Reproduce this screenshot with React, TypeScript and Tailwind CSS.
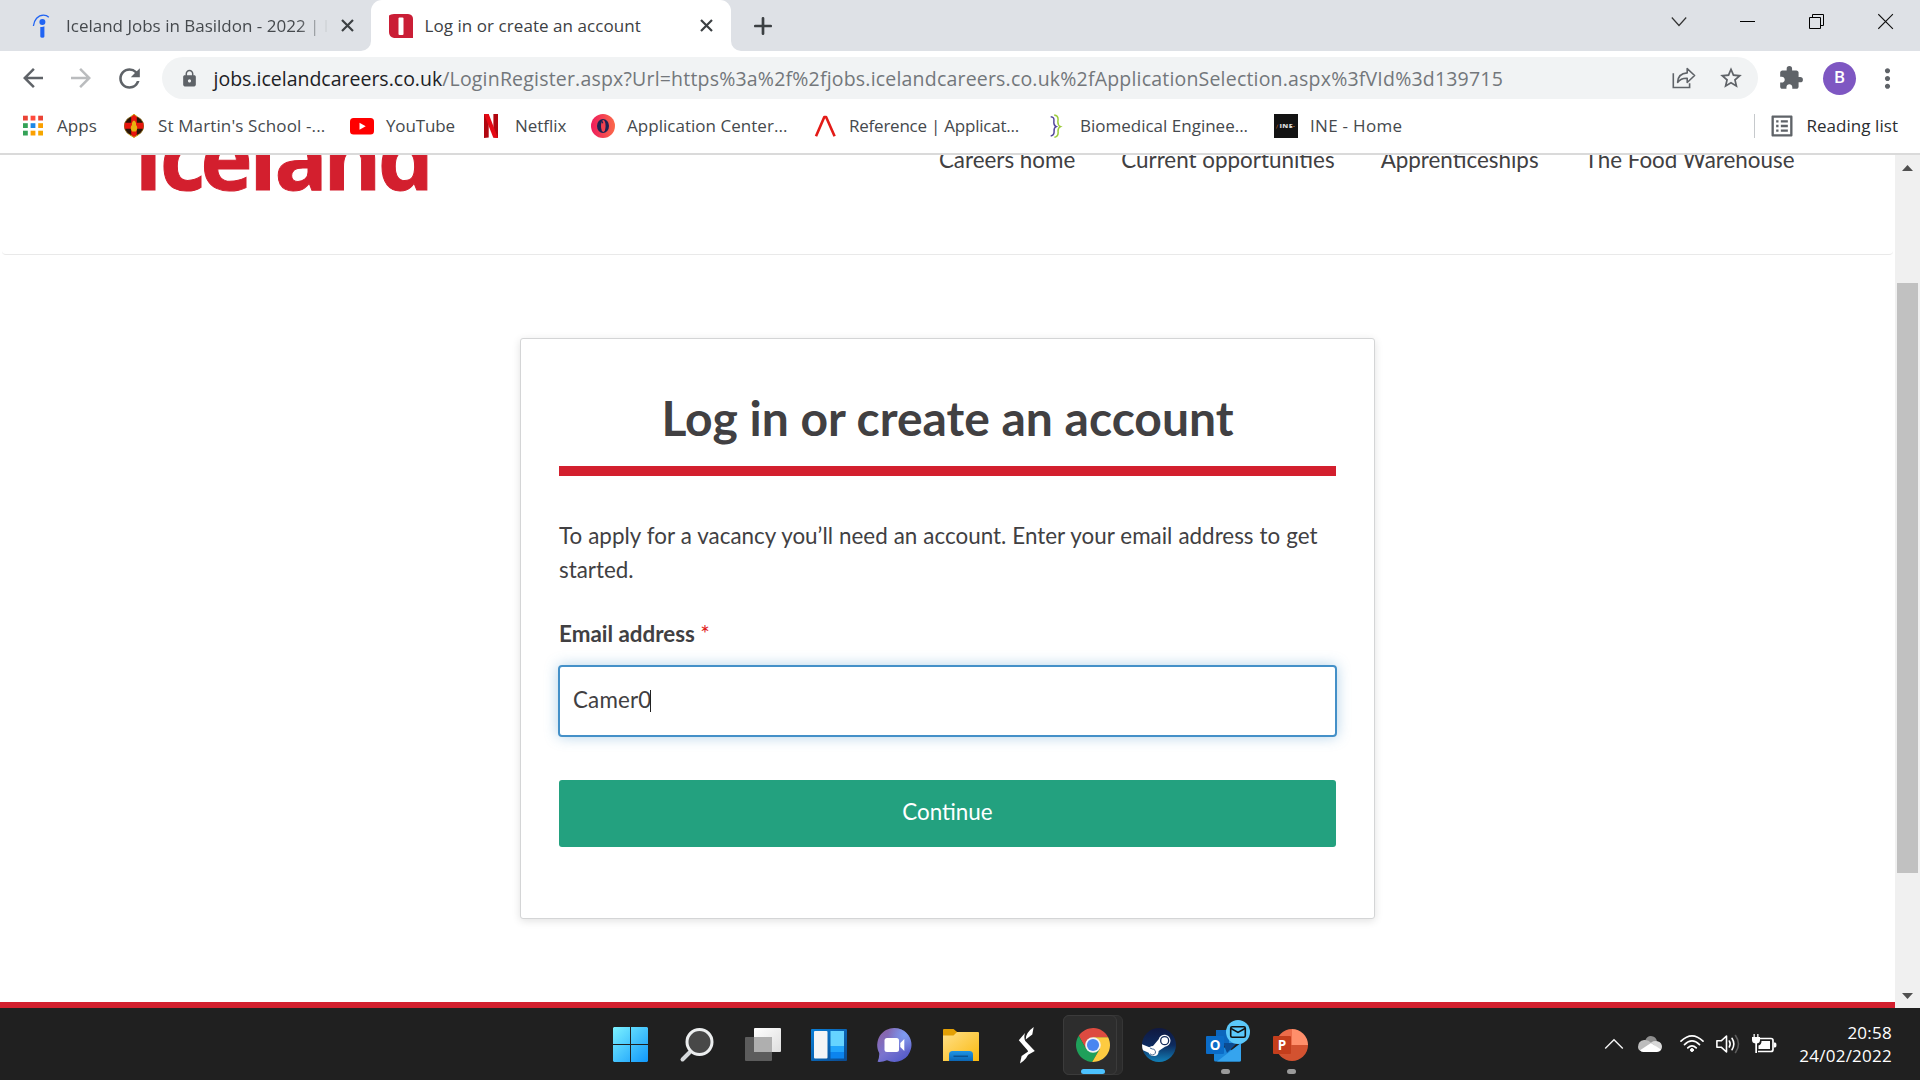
import React from "react";
import {
  MdArrowBack,
  MdArrowForward,
  MdRefresh,
  MdLock,
  MdStarBorder,
  MdExtension,
  MdMoreVert,
  MdListAlt,
} from "react-icons/md";

/* ---------- Tab strip ---------- */

function TabClose() {
  return (
    <svg width="13" height="13" viewBox="0 0 13 13" stroke="#3c4043" strokeWidth="2.2" fill="none">
      <path d="M1 1L12 12M12 1L1 12" />
    </svg>
  );
}

function IndeedIcon() {
  return (
    <svg width="24" height="24" viewBox="0 0 24 24">
      <circle cx="12.400" cy="7.900" r="3" fill="#2164f3" />
      <path d="M10.300 12.900q2.200.6 4.100-.6v10.300q0 1.200-2 1.200t-2.100-1.200z" fill="#2164f3" />
      <path d="M3.400 12C4 6 8 1.100 13.500 1.100c2 0 3.800.6 5.300 2.100" fill="none" stroke="#2164f3" strokeWidth="1.300" />
    </svg>
  );
}

function IcelandIcon() {
  return (
    <svg width="24" height="24" viewBox="0 0 24 24">
      <path d="M0 1.500Q1.500 0 5 0h14q5 .5 5 5v19h-4H5Q0 23 0 18z" fill="#ca1e36" />
      <rect x="9.500" y="3.500" width="5" height="17.500" rx="1" fill="#fff" />
    </svg>
  );
}

function TabStrip() {
  return (
    <div className="flex h-[51px] bg-white text-[17px] text-[#3c4043]">
      <div className="flex w-[371px] items-center rounded-br-[10px] bg-[#dee1e6] pl-[30px]">
        <IndeedIcon />
        <div className="ml-3 w-[263px] overflow-hidden whitespace-nowrap text-[#45494d] [mask-image:linear-gradient(to_right,black_88%,transparent)]">
          Iceland Jobs in Basildon - 2022 | Indeed
        </div>
        <div className="ml-[12px]">
          <TabClose />
        </div>
      </div>
      <div className="w-[360px] bg-[#dee1e6]">
        <div className="flex h-full items-center rounded-t-[11px] bg-white pl-[18px]">
          <IcelandIcon />
          <div className="ml-[11.500px] w-[275px] whitespace-nowrap tracking-[0.06px]">Log in or create an account</div>
          <TabClose />
        </div>
      </div>
      <div className="flex flex-1 items-center justify-between rounded-bl-[10px] bg-[#dee1e6] pl-[23px]">
        <svg width="18" height="18" viewBox="0 0 18 18" stroke="#3c4043" strokeWidth="2.700" strokeLinecap="round">
          <path d="M9 1.300v15.400M1.300 9h15.400" />
        </svg>
        <div className="flex h-full items-start pt-[13px] text-black">
          <svg className="mr-[53px]" width="16" height="17" viewBox="0 0 16 17" fill="none" stroke="#333" strokeWidth="1.200">
            <path d="M.8 4.500L8 12.500l7.200-8" />
          </svg>
          <svg className="mr-[53px]" width="16" height="17" viewBox="0 0 16 17">
            <path d="M0 8h15v1H0z" fill="#000" />
          </svg>
          <svg className="mr-[53px]" width="16" height="17" viewBox="0 0 16 17" fill="none" stroke="#000">
            <path d="M.5 4.500h11v11H.5zM3.500 4.500v-3h11v11h-3" />
          </svg>
          <svg className="mr-[26px]" width="16" height="17" viewBox="0 0 16 17" fill="none" stroke="#111" strokeWidth="1.100">
            <path d="M.3 1.200l14.600 14.600M14.900 1.200L.3 15.800" />
          </svg>
        </div>
      </div>
    </div>
  );
}

/* ---------- Toolbar ---------- */

function ShareIcon() {
  return (
    <svg width="24" height="22" viewBox="0 0 24 22" fill="none" stroke="#5f6368" strokeWidth="1.600">
      <path d="M1.300 6.200V20.500H17.600V16.300" />
      <path d="M15.200 1.600v4.300C9 6.300 5.800 10 5.600 15.400c2.300-3 5.200-4.300 9.600-4.100v4.200L22.600 8.500z" strokeLinejoin="round" />
    </svg>
  );
}

function Toolbar() {
  return (
    <div className="flex h-[54px] items-center bg-white pl-[9px]">
      <div className="flex w-12 justify-center">
        <MdArrowBack size={30} color="#5f6368" />
      </div>
      <div className="flex w-12 justify-center">
        <MdArrowForward size={30} color="#babcbe" />
      </div>
      <div className="flex w-12 justify-center">
        <MdRefresh size={31} color="#5f6368" />
      </div>
      <div className="ml-[9px] flex h-[42px] w-[1596px] items-center rounded-full bg-[#f1f3f4] pl-[17.500px]">
        <MdLock size={19} color="#5f6368" />
        <div className="mt-px ml-[15px] flex-1 whitespace-nowrap text-[19.500px] leading-[28px] text-[#73777b]">
          <span className="text-[#202124]">jobs.icelandcareers.co.uk</span>
          <span className="tracking-[0.195px]">
            /LoginRegister.aspx?Url=https%3a%2f%2fjobs.icelandcareers.co.uk%2fApplicationSelection.aspx%3fVId%3d139715
          </span>
        </div>
        <ShareIcon />
        <MdStarBorder className="mr-[14px] ml-[22px]" size={26} color="#5f6368" />
      </div>
      <div className="ml-[9px] flex w-12 justify-center">
        <MdExtension size={26} color="#5f6368" />
      </div>
      <div className="ml-[8px] flex size-[33px] items-center justify-center rounded-full bg-[#7e57c2] font-['Roboto'] text-[17px] font-medium text-white">
        B
      </div>
      <div className="ml-[7px] flex w-12 justify-center">
        <MdMoreVert size={31} color="#5f6368" />
      </div>
    </div>
  );
}

/* ---------- Bookmarks ---------- */

function AppsIcon() {
  const dots = ["#ea4335", "#ff4a3d", "#ea4335", "#34a257", "#1e88e5", "#fba000", "#34a257", "#fba000", "#f5a700"];
  return (
    <svg width="24" height="24" viewBox="0 0 24 24">
      {dots.map((c, i) => (
        <rect key={i} x={2 + (i % 3) * 7.600} y={1.700 + Math.floor(i / 3) * 7.500} width="4.800" height="4.800" fill={c} />
      ))}
    </svg>
  );
}

function CrestIcon() {
  return (
    <svg width="24" height="24" viewBox="0 0 24 24">
      <ellipse cx="12" cy="12" rx="9.600" ry="9.800" fill="#2a1408" stroke="#8a6a10" strokeWidth=".8" />
      <path d="M9.200 2.500L12 .3l2.800 2.200v6.200h6.600v6h-6.600v5.800L12 23.500l-2.800-3v-5.800H2.600v-6h6.600z" fill="#e8150c" />
      <path d="M12 6.500q2.600 1.500 2 4.500 2.500 2.500 0 6.500h-4q-2.500-4 0-6.500-.6-3 2-4.500z" fill="#e8b010" />
      <path d="M12 .3l-3 2.200M12 .3l3 2.200M7 20.300l5 3.200 5-3.200" stroke="#c99a10" fill="none" />
    </svg>
  );
}

function YouTubeIcon() {
  return (
    <svg width="24" height="24" viewBox="0 0 24 24">
      <rect y="4" width="24" height="16.500" rx="3.500" fill="#f00" />
      <path d="M9.500 8.700v7l6.200-3.500z" fill="#fff" />
    </svg>
  );
}

function NetflixIcon() {
  return (
    <svg width="24" height="24" viewBox="0 0 24 24">
      <path d="M5 0h4.700v23.500L5 24zM14.400 0H19v24l-4.600-.5z" fill="#b1060f" />
      <path d="M5 0h4.700L19 24l-4.800-.5z" fill="#e50914" />
    </svg>
  );
}

function OIcon() {
  return (
    <svg width="24" height="24" viewBox="0 0 24 24">
      <defs>
        <linearGradient id="og">
          <stop offset="0" stopColor="#ed1b5c" />
          <stop offset="1" stopColor="#fb6a4a" />
        </linearGradient>
      </defs>
      <circle cx="12" cy="12" r="12" fill="url(#og)" />
      <ellipse cx="12" cy="12" rx="6" ry="7" fill="#1e2352" />
      <ellipse cx="12.300" cy="12" rx="2.300" ry="5.900" fill="#f0414f" />
      <path d="M10.500 6.800q2.200.6 1.500 3-1.800-.8-1.500-3z" fill="#1e2352" />
    </svg>
  );
}

function ReferenceIcon() {
  return (
    <svg width="24" height="24" viewBox="0 0 24 24">
      <path d="M3 22.300L11.300 3h1.800L21.600 22.300" fill="none" stroke="#e31b17" strokeWidth="2.600" strokeLinejoin="round" />
    </svg>
  );
}

function BracesIcon() {
  return (
    <svg width="24" height="24" viewBox="0 0 24 24" fill="none" strokeWidth="1.500">
      <path d="M6.700 2.700q3.800.3 3.200 4.300-.6 4.300 2.400 5.600-2.600 1-2.200 4.600.3 4-3.400 4.700" stroke="#54489c" />
      <path d="M10.200 1q4.400.6 3.800 5.300-.7 5 2.600 6.300-3 1.200-2.500 5.400.4 4.700-3.700 5.300" stroke="#9ccb3b" />
    </svg>
  );
}

function IneIcon() {
  return (
    <svg width="24" height="24" viewBox="0 0 24 24">
      <rect width="24" height="24" fill="#131313" />
      <path d="M4 10.500l-1.500 4" stroke="#7a3d18" strokeWidth="1" />
      <path d="M19 12.500h2" stroke="#7a4a28" />
      <text x="5.500" y="14.300" fontSize="5.500" fontWeight="800" fill="#d8d8d8" textLength="13.500" lengthAdjust="spacingAndGlyphs">
        INE
      </text>
    </svg>
  );
}

function Bookmark({ icon, label, cls }: { icon: React.ReactNode; label: string; cls: string }) {
  return (
    <div className={"flex shrink-0 items-center gap-[12px] whitespace-nowrap " + cls}>
      {icon}
      <span>{label}</span>
    </div>
  );
}

function Bookmarks() {
  return (
    <div className="flex h-[50px] items-center border-b-2 border-[#dadada] bg-white pr-[22px] pb-[6px] pl-[21px] text-[17px] text-[#45494d]">
      <Bookmark icon={<AppsIcon />} label="Apps" cls="w-[101px] tracking-[0.1px]" />
      <Bookmark icon={<CrestIcon />} label="St Martin's School -..." cls="w-[228px] tracking-[0.13px]" />
      <Bookmark icon={<YouTubeIcon />} label="YouTube" cls="w-[129px] tracking-[-0.15px]" />
      <Bookmark icon={<NetflixIcon />} label="Netflix" cls="w-[112px] tracking-[-0.05px]" />
      <Bookmark icon={<OIcon />} label="Application Center..." cls="w-[222px] tracking-[0.03px]" />
      <Bookmark icon={<ReferenceIcon />} label="Reference | Applicat..." cls="w-[231px] tracking-[-0.23px]" />
      <Bookmark icon={<BracesIcon />} label="Biomedical Enginee..." cls="w-[230px]" />
      <Bookmark icon={<IneIcon />} label="INE - Home" cls="w-[140px] tracking-[0.3px]" />
      <div className="ml-auto flex items-center">
        <div className="h-6 w-px bg-[#c6c9cc]" />
        <MdListAlt className="ml-[13px]" size={28} color="#5f6368" />
        <span className="ml-[10px] tracking-[0.05px] text-[#2a2d30]">Reading list</span>
      </div>
    </div>
  );
}

/* ---------- Page ---------- */

function Logo() {
  return (
    <div className="flex font-['Open_Sans'] text-[88px] leading-[88px] font-bold text-[#d31f2e] [-webkit-text-stroke:1px_#d31f2e]">
      <span className="w-[25px]">i</span>
      <span className="w-[40.500px]">c</span>
      <span className="w-[49px]">e</span>
      <span className="w-[25px]">l</span>
      <span className="w-[49px]">a</span>
      <span className="w-[54.500px]">n</span>
      <span className="w-[54px]">d</span>
    </div>
  );
}

function Page() {
  return (
    <div className="flex h-[853px] bg-white">
      <div className="flex w-[1895px] flex-col overflow-hidden font-['Lato',sans-serif] text-[22.400px] leading-[34px] text-[#414042]">
        <div className="mx-[2px] h-[100px] shrink-0 rounded-b-[4px] border-b border-[#e9e9e9]">
          <div className="-mt-[43px] flex items-start justify-between pr-[98.500px] pl-[133px]">
            <Logo />
            <nav className="mt-[31px] flex gap-[46px]">
              <span>Careers home</span>
              <span>Current opportunities</span>
              <span>Apprenticeships</span>
              <span>The Food Warehouse</span>
            </nav>
          </div>
        </div>
        <div className="mt-[83px] ml-[520px] h-[581px] w-[855px] shrink-0 rounded-[3px] border border-[#d4d5d6] bg-white px-[38px] pt-[50px] shadow-[0_2px_8px_rgba(0,0,0,0.12)]">
          <h1 className="text-center text-[48px] leading-[58px] font-bold">Log in or create an account</h1>
          <div className="mt-[19px] h-[10px] bg-[#d31f2e]" />
          <p className="mt-[43px] w-[777px] tracking-[0.001px] [word-spacing:0.3px]">
            To apply for a vacancy you’ll need an account. Enter your email address to get started.
          </p>
          <div className="mt-[30px] font-bold">
            Email address <span className="font-normal text-[#e0201b]">*</span>
          </div>
          <div className="mt-[14px] -mr-px -ml-px flex h-[72px] items-center rounded-[4px] border-2 border-[#4490c8] pl-[13px] shadow-[0_0_14px_rgba(68,144,200,0.4)]">
            <span className="-mt-[2px] tracking-[0.15px]">Camer0</span>
            <span className="-mt-px -ml-px h-[22px] w-px bg-[#222]" />
          </div>
          <div className="mt-[43px] h-[67px] rounded-[3px] bg-[#23a17f] pt-[15px] text-center text-white">Continue</div>
        </div>
        <div className="mt-auto h-[6px] shrink-0 bg-[#d31f2e]" />
      </div>
      <div className="flex w-[25px] flex-col items-center bg-[#f0f0f0]">
        <svg className="mt-[10px]" width="11" height="6" viewBox="0 0 11 6">
          <path d="M5.500 0L11 6H0z" fill="#505050" />
        </svg>
        <div className="mt-[112px] h-[590px] w-[21px] bg-[#c1c1c1]" />
        <svg className="mt-auto mb-[9px]" width="11" height="6" viewBox="0 0 11 6">
          <path d="M5.500 6L11 0H0z" fill="#505050" />
        </svg>
      </div>
    </div>
  );
}

/* ---------- Taskbar ---------- */

function StartIcon() {
  return (
    <svg width="36" height="36" viewBox="0 0 36 36">
      <defs>
        <linearGradient id="wg" x1="0" y1="0" x2="36" y2="36" gradientUnits="userSpaceOnUse">
          <stop offset="0" stopColor="#7cf2ff" />
          <stop offset="1" stopColor="#0d95fb" />
        </linearGradient>
      </defs>
      <path d="M1 0H17v17H0V1zM18 0h16l1 1v16H18zM0 18H17V35H1l-1-1zM18 18H35v16l-1 1H18z" fill="url(#wg)" />
    </svg>
  );
}

function SearchIcon() {
  return (
    <svg width="36" height="36" viewBox="0 0 36 36">
      <path d="M10.500 25.500L3.500 32.500" stroke="#d5d8da" strokeWidth="4" strokeLinecap="round" />
      <circle cx="20.500" cy="15" r="12.500" fill="#484848" stroke="#eceeef" strokeWidth="3" />
    </svg>
  );
}

function TaskViewIcon() {
  return (
    <svg width="36" height="36" viewBox="0 0 36 36">
      <defs>
        <linearGradient id="tv" x2="1" y2="1">
          <stop offset="0" stopColor="#fff" />
          <stop offset="1" stopColor="#dedede" />
        </linearGradient>
      </defs>
      <rect x="9" y="1" width="27" height="24" rx="1" fill="url(#tv)" />
      <rect x="0" y="10" width="27" height="24" rx="1" fill="#5c5c5c" />
      <rect x="9" y="10" width="18" height="15" fill="#afafaf" />
    </svg>
  );
}

function WidgetsIcon() {
  return (
    <svg width="36" height="36" viewBox="0 0 36 36">
      <defs>
        <linearGradient id="wd" x2="1" y2="1">
          <stop offset="0" stopColor="#0a7fd8" />
          <stop offset="1" stopColor="#0b4a8f" />
        </linearGradient>
      </defs>
      <rect y="2" width="36" height="32" rx="1" fill="url(#wd)" />
      <rect x="3" y="4" width="13.500" height="27.500" rx="1" fill="#f5f5f6" />
      <rect x="19.500" y="4" width="13.500" height="15" fill="#66d4ff" />
      <rect x="19.500" y="19" width="13.500" height="6" fill="#22a5fb" />
      <rect x="19.500" y="25" width="13.500" height="6.500" fill="#0c84ee" />
    </svg>
  );
}

function ChatIcon() {
  return (
    <svg width="36" height="36" viewBox="0 0 36 36">
      <defs>
        <linearGradient id="ch" x1=".1" y1=".1" x2=".8" y2="1">
          <stop offset="0" stopColor="#8a64a8" />
          <stop offset=".5" stopColor="#7a74cf" />
          <stop offset="1" stopColor="#5059c9" />
        </linearGradient>
        <radialGradient id="ch2" cx=".8" cy=".2" r=".5">
          <stop offset="0" stopColor="#7d9cf0" />
          <stop offset="1" stopColor="#7d9cf0" stopOpacity="0" />
        </radialGradient>
      </defs>
      <path d="M17.500 1a17 17 0 1 1-7.500 32.300Q5 35.300 .6 34.800 2.500 31 2.200 26A17 17 0 0 1 17.500 1z" fill="url(#ch)" />
      <circle cx="17.500" cy="18" r="17" fill="url(#ch2)" />
      <rect x="7.500" y="11" width="14.500" height="14" rx="2.500" fill="#fff" />
      <path d="M23.300 16l4-4v12l-4-4z" fill="#fff" />
    </svg>
  );
}

function FolderIcon() {
  return (
    <svg width="36" height="36" viewBox="0 0 36 36">
      <defs>
        <linearGradient id="fo" x2="1" y2="1">
          <stop offset="0" stopColor="#ffe088" />
          <stop offset="1" stopColor="#fbb90f" />
        </linearGradient>
        <linearGradient id="fb" x2="0" y2="1">
          <stop offset="0" stopColor="#1e95e6" />
          <stop offset="1" stopColor="#0b66b5" />
        </linearGradient>
      </defs>
      <path d="M0 3q0-1 1-1h9.500l4 3.300-3 4.700H0z" fill="#e3a005" />
      <path d="M0 8.500h10.500L14 5h21q1 0 1 1v28H0z" fill="url(#fo)" />
      <path d="M6 34v-6.500q0-3.500 3.500-3.500h17q3.500 0 3.500 3.500V34z" fill="url(#fb)" />
      <path d="M10.500 29.300h14.500" stroke="#0b5291" strokeWidth="1.500" />
    </svg>
  );
}

function SlashSIcon() {
  return (
    <svg width="18" height="38" viewBox="0 0 18 38" fill="#fff">
      <path d="M15.700 1L14.300 8.500 7.700 13.600Q7.300 7 15.700 1z" />
      <path d="M7 7Q5.500 11.500 7.300 15l9.500 10L8.500 29.700Q11 26.500 9.500 24.300L.8 14.300z" />
      <path d="M10.500 25.300Q10.500 32 2 37.500L3.600 30z" />
    </svg>
  );
}

function ChromeIcon() {
  return (
    <svg width="34" height="34" viewBox="0 0 48 48">
      <path d="M3.810 11.030A24 24 0 0 1 45.330 13H24L14.470 29.500z" fill="#dd4b40" />
      <path d="M3.810 11.030L14.470 29.500H33.530L22.860 47.970A24 24 0 0 1 3.810 11.030z" fill="#1fa05a" />
      <path d="M45.330 13A24 24 0 0 1 22.860 47.970L33.530 29.500 24 13z" fill="#fdcb41" />
      <circle cx="24" cy="24" r="11" fill="#f2f2f2" />
      <circle cx="24" cy="24" r="8.600" fill="#4a86f0" />
    </svg>
  );
}

function SteamIcon() {
  return (
    <svg width="34" height="34" viewBox="0 0 102 102">
      <defs>
        <linearGradient id="st" x2="0" y2="1">
          <stop offset="0" stopColor="#10183f" />
          <stop offset=".5" stopColor="#0d2a5e" />
          <stop offset="1" stopColor="#1280b8" />
        </linearGradient>
      </defs>
      <circle cx="51" cy="51" r="51" fill="url(#st)" />
      <path d="M0 49L22 58Q27 54 33 54L50 34A18 18 0 1 1 69 56L50 69Q50 84 36 84 24 84 20 74L3 67Q0 60 0 49z" fill="#fff" />
      <circle cx="68" cy="38" r="12" fill="#fff" stroke="#152c5c" strokeWidth="4" />
      <path d="M24 60l7 3a9 9 0 1 1-7 14" fill="none" stroke="#41638c" strokeWidth="3" />
    </svg>
  );
}

function OutlookIcon() {
  return (
    <svg width="46" height="42" viewBox="0 0 46 42" className="font-['Open_Sans']">
      <path d="M11 10h26v14H11z" fill="#0f5ba8" />
      <path d="M11 10h13v13H11z" fill="#0c66bd" />
      <path d="M24 10h12v13H24z" fill="#2490df" />
      <path d="M9 24l18 6 9-7v17q0 1.500-1.500 1.500h-24Q9 41.500 9 40z" fill="#1a87dc" />
      <path d="M36 23v17q0 1.500-1.500 1.500H12z" fill="#35a4ee" />
      <path d="M18 23h14l-10 10z" fill="#0b4c94" />
      <rect x="1" y="16" width="18" height="18" rx="1" fill="#0b6cc8" />
      <text x="10" y="30" textAnchor="middle" fontSize="13.500" fontWeight="700" fill="#fff">
        O
      </text>
      <circle cx="33" cy="12" r="12" fill="#5bc8fa" />
      <rect x="25.700" y="6.800" width="14.600" height="10.400" rx="1.500" fill="none" stroke="#111" strokeWidth="1.600" />
      <path d="M26 8.500l7 4 7-4" fill="none" stroke="#111" strokeWidth="1.500" />
    </svg>
  );
}

function PowerPointIcon() {
  return (
    <svg width="36" height="34" viewBox="0 0 36 34" className="font-['Open_Sans']">
      <path d="M19 1a16 16 0 0 0-16 16h16z" fill="#ec6c4a" />
      <path d="M19 1a16 16 0 0 1 16 16H19z" fill="#ff8f6b" />
      <path d="M35 17a16 16 0 0 1-32 0z" fill="#d35230" />
      <rect x="0" y="8" width="18" height="18" rx="1" fill="#c43e1c" />
      <text x="9" y="21.800" textAnchor="middle" fontSize="13.500" fontWeight="700" fill="#fff">
        P
      </text>
    </svg>
  );
}

function Cell({ children }: { children: React.ReactNode }) {
  return <div className="flex h-[72px] w-[66px] items-center justify-center pt-[2px]">{children}</div>;
}

function Taskbar() {
  return (
    <div className="flex h-[72px] bg-[#202020] pr-[28px] pl-[598px]">
      <Cell><StartIcon /></Cell>
      <Cell><SearchIcon /></Cell>
      <Cell><TaskViewIcon /></Cell>
      <Cell><WidgetsIcon /></Cell>
      <Cell><ChatIcon /></Cell>
      <Cell><FolderIcon /></Cell>
      <Cell><SlashSIcon /></Cell>
      <div className="flex h-[72px] w-[66px] items-start pt-[7px] pl-[3px]">
        <div className="h-[60px] w-[60px] rounded-[6px] border border-[#353535] bg-[#2b2b2b]">
          <div className="-mt-px -ml-px flex h-[60px] w-[54px] flex-col items-center rounded-[6px] border border-[#3b3b3b] bg-[#2d2d2d] pt-[12px] pl-[6px]">
            <ChromeIcon />
            <div className="mt-[7px] h-[5px] w-[24px] rounded-full bg-[#4cc2ff]" />
          </div>
        </div>
      </div>
      <Cell><SteamIcon /></Cell>
      <div className="flex h-[72px] w-[66px] flex-col items-center pt-[12px] pl-[6px]">
        <OutlookIcon />
        <div className="mt-[7px] mr-[6px] h-[5px] w-[9px] rounded-full bg-[#9a9a9a]" />
      </div>
      <div className="flex h-[72px] w-[66px] flex-col items-center pt-[20px]">
        <PowerPointIcon />
        <div className="mt-[7px] h-[5px] w-[9px] rounded-full bg-[#9a9a9a]" />
      </div>
      <div className="ml-auto flex items-center pb-px">
        <svg width="20" height="20" viewBox="0 0 20 20" fill="none" stroke="#f3f3f3" strokeWidth="1.400">
          <path d="M1.200 14.500L10 5.700l8.800 8.800" />
        </svg>
        <svg className="ml-[14px]" width="24" height="18" viewBox="0 0 24 18">
          <path d="M7 6q2-5.500 7-4.800 4 .5 5 5L11 12z" fill="#8e8e8e" />
          <path d="M0 12q0-6 6-7 4-.6 7.500 3L4 16.500Q0 15.500 0 12z" fill="#bdbdbd" />
          <path d="M13 7.500q3-2 6.500-1.300Q24 7.500 24 12q0 2.500-2 4z" fill="#d8d8d8" />
          <path d="M2 15.300L13 8l10 6.500q-1.500 2.500-4 2.500H5q-2 0-3-1.700z" fill="#fff" />
        </svg>
        <svg className="ml-[18px]" width="24" height="20" viewBox="0 0 24 20" fill="none" stroke="#fff" strokeWidth="1.700" strokeLinecap="round">
          <path d="M1 7.200Q12-3.500 23 7.200M4.500 10.600Q12 3.300 19.500 10.600M7.800 13.800Q12 9.800 16.200 13.800" />
          <circle cx="12" cy="16" r="1.500" fill="#fff" strokeWidth="1" />
        </svg>
        <svg className="ml-[12px]" width="24" height="20" viewBox="0 0 24 20" fill="none" stroke="#fff" strokeWidth="1.600" strokeLinejoin="round" strokeLinecap="round">
          <path d="M.9 6.800h4.300L10.500 2v16l-5.300-4.800H.9z" />
          <path d="M13.300 7q1.800 3 0 6M16 4.300q3.700 5.700 0 11.400" />
          <path d="M19.500 1.500q6 8.500 0 17" stroke="#5c5c5c" />
        </svg>
        <svg className="ml-[12px]" width="25" height="20" viewBox="0 0 25 20">
          <path d="M8 4.500h11q2 0 2 2v9q0 2-2 2H6" fill="none" stroke="#fff" strokeWidth="1.700" />
          <path d="M22 8.500h1.200q1.300.3 1.300 2.500T23.200 13.500H22z" fill="#fff" />
          <path d="M9.500 7H18v8H6.500v-3.500q3-.7 3-4.500z" fill="#fff" />
          <path d="M1.500 0h1.300v3h2.400V0h1.300v3H8v3Q8 9 5 9.500V19H3.300V9.500Q0 9 0 6V3h1.500z" fill="#fff" />
        </svg>
        <div className="ml-[22px] text-right text-[17px] leading-[23px] tracking-[0.25px] text-white">
          <div>20:58</div>
          <div>24/02/2022</div>
        </div>
      </div>
    </div>
  );
}

export default function App() {
  return (
    <div className="h-[1080px] w-[1920px] overflow-hidden bg-white font-['Open_Sans','Noto_Sans',sans-serif]">
      <TabStrip />
      <Toolbar />
      <Bookmarks />
      <Page />
      <Taskbar />
    </div>
  );
}
